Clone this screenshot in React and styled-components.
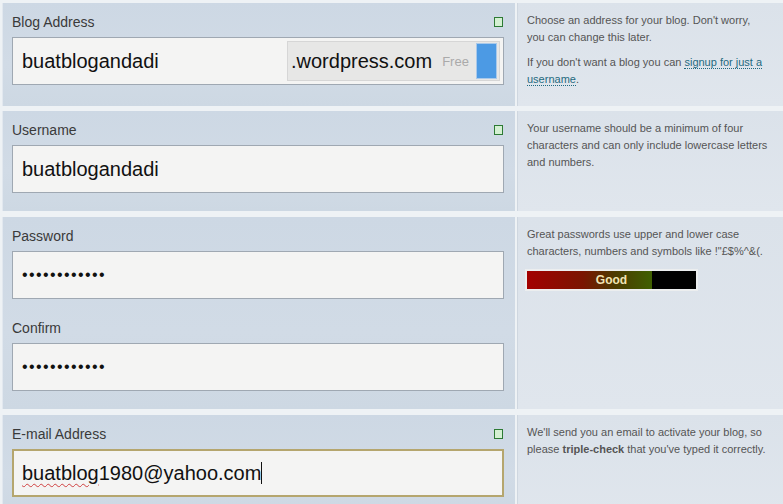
import React from "react";
import styled, { createGlobalStyle } from "styled-components";

const GlobalStyle = createGlobalStyle`
  body {
    margin: 0;
    background: #eef2f5;
    font-family: "Liberation Sans", Arial, sans-serif;
  }
`

const Page = styled.div`
  width: 783px;
  height: 504px;
  overflow: hidden;
  padding: 3px 0 0 2px;
  box-sizing: border-box;
  display: flex;
  flex-direction: column;
  gap: 6px;
`
const Row = styled.div`
  display: grid;
  grid-template-columns: 513px 1fr;
  gap: 2px;
  flex-shrink: 0;
`
const FieldPanel = styled.div`
  background: linear-gradient(180deg, #cdd8e4 0%, #d1dbe6 60%, #cdd8e3 100%);
  border-left: 1px solid #e2e8ef;
  padding: 0 11px ${p => p.$bottom || 18}px 9px;
`
const HelpPanel = styled.div`
  background: linear-gradient(180deg, #dbe2ea 0%, #e0e6ed 100%);
  border-left: 1px solid #cfd7e0;
  padding: 9px 12px 0 9px;
  font-size: 11px;
  line-height: 17px;
  color: #555;
`
const LabelRow = styled.div`
  height: 34px;
  padding-top: 4px;
  box-sizing: border-box;
  display: flex;
  align-items: center;
  justify-content: space-between;
  margin-top: ${p => p.$gap || 0}px;
`
const Label = styled.span`
  font-size: 14px;
  color: #3a3a3a;
`
const OkMark = styled.span`
  width: 7px;
  height: 8px;
  border: 1px solid #2d7a34;
  background: #d4f0d2;
  margin-right: 1px;
`
const Field = styled.div`
  height: 48px;
  box-sizing: border-box;
  border: ${p => (p.$focus ? "2px solid #b5a66e" : "1px solid #9fa8b2")};
  background: #f4f4f3;
  display: flex;
  align-items: center;
  padding: 0 3px 0 ${p => (p.$focus ? 8 : 9)}px;
  font-size: 20px;
  color: #111;
`
const Value = styled.span`
  flex: 1;
`
const Dots = styled.span`
  font-size: 16px;
  letter-spacing: 1.4px;
  color: #111;
`
const Misspelled = styled.span`
  text-decoration: underline wavy #d04040;
  text-decoration-thickness: 1px;
  text-underline-offset: 3px;
`
const Caret = styled.span`
  display: inline-block;
  width: 1px;
  height: 22px;
  background: #111;
  vertical-align: -4px;
`
const Suffix = styled.div`
  width: 213px;
  height: 40px;
  box-sizing: border-box;
  background: #e7e7e6;
  border: 1px solid #d6d6d6;
  display: flex;
  align-items: center;
  padding: 0 2px 0 3px;
`
const Domain = styled.span`
  font-size: 20px;
  color: #111;
`
const Free = styled.span`
  font-size: 13px;
  color: #aaa;
  margin-left: 10px;
`
const Toggle = styled.span`
  width: 21px;
  height: 36px;
  margin-left: auto;
  background: #4c9ae4;
  border: 1px solid #a9c9ea;
  box-sizing: border-box;
`
const Para = styled.p`
  margin: 0 0 8px;
`
const Link = styled.a`
  color: #1f6a80;
  text-decoration: none;
  border-bottom: 1px dotted #1f6a80;
`
const Meter = styled.div`
  margin: 9px 0 0 -2px;
  width: 173px;
  padding: 2px;
  box-sizing: border-box;
  background: #eceeef;
`
const MeterTrack = styled.div`
  position: relative;
  height: 18px;
  background: #000;
  display: flex;
  align-items: center;
  justify-content: center;
`
const MeterFill = styled.div`
  position: absolute;
  left: 0;
  top: 0;
  bottom: 0;
  background: linear-gradient(90deg, #a30000 0%, #7a1500 45%, #4c3a00 70%, #3f6000 100%);
`
const MeterText = styled.span`
  position: relative;
  font-size: 12px;
  font-weight: bold;
  color: #f1e4b4;
`

const App = () => {
  const strength = 74;

  return (
    <Page>
      <GlobalStyle />

      <Row style={{ height: 102 }}>
        <FieldPanel $bottom={21}>
          <LabelRow>
            <Label>Blog Address</Label>
            <OkMark />
          </LabelRow>
          <Field>
            <Value>buatblogandadi</Value>
            <Suffix>
              <Domain>.wordpress.com</Domain>
              <Free>Free</Free>
              <Toggle />
            </Suffix>
          </Field>
        </FieldPanel>
        <HelpPanel>
          <Para>Choose an address for your blog. Don't worry, you can change this later.</Para>
          <Para>
            If you don't want a blog you can <Link href="#">signup for just a username</Link>.
          </Para>
        </HelpPanel>
      </Row>

      <Row>
        <FieldPanel>
          <LabelRow>
            <Label>Username</Label>
            <OkMark />
          </LabelRow>
          <Field>
            <Value>buatblogandadi</Value>
          </Field>
        </FieldPanel>
        <HelpPanel>
          <Para>Your username should be a minimum of four characters and can only include lowercase letters and numbers.</Para>
        </HelpPanel>
      </Row>

      <Row>
        <FieldPanel>
          <LabelRow>
            <Label>Password</Label>
          </LabelRow>
          <Field>
            <Dots>••••••••••••</Dots>
          </Field>
          <LabelRow $gap={10}>
            <Label>Confirm</Label>
          </LabelRow>
          <Field>
            <Dots>••••••••••••</Dots>
          </Field>
        </FieldPanel>
        <HelpPanel>
          <Para style={{ margin: 0 }}>
            Great passwords use upper and lower case characters, numbers and symbols like !"£$%^&amp;(.
          </Para>
          <Meter>
            <MeterTrack>
              <MeterFill style={{ width: `${strength}%` }} />
              <MeterText>Good</MeterText>
            </MeterTrack>
          </Meter>
        </HelpPanel>
      </Row>

      <Row style={{ height: 100 }}>
        <FieldPanel>
          <LabelRow>
            <Label>E-mail Address</Label>
            <OkMark />
          </LabelRow>
          <Field $focus>
            <Value>
              <Misspelled>buatblog</Misspelled>1980@yahoo.com<Caret />
            </Value>
          </Field>
        </FieldPanel>
        <HelpPanel>
          <Para>
            We'll send you an email to activate your blog, so please <b>triple-check</b> that you've typed it correctly.
          </Para>
        </HelpPanel>
      </Row>
    </Page>
  );
};

export default App
